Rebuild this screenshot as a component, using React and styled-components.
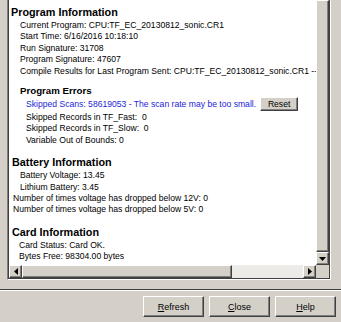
import React from 'react';
import styled, { createGlobalStyle } from 'styled-components';

const GlobalStyle = createGlobalStyle`
  html, body { margin: 0; padding: 0; background: #d4d0c8; }
  body { font-family: "Liberation Sans", Arial, sans-serif; }
`;

const face = '#d4d0c8';
const uiFont = '"Liberation Sans", Arial, sans-serif';

const Window = styled.div`
  width: 341px;
  height: 322px;
  background: ${face};
  display: flex;
  flex-direction: column;
  overflow: hidden;
`;

const Body = styled.div`
  display: flex;
  height: 280px;
  padding: 0 10px 0 7px;
`;

const Sunken = styled.div`
  flex: 1;
  display: flex;
  border-left: 1px solid #808080;
  border-right: 1px solid #ffffff;
  border-bottom: 1px solid #ffffff;
  min-width: 0;
`;

const Frame = styled.div`
  flex: 1;
  min-width: 0;
  display: grid;
  grid-template-columns: 1fr 13px;
  grid-template-rows: 1fr 13px;
  border-left: 1px solid #404040;
  border-right: 1px solid #404040;
  border-bottom: 1px solid #404040;
`;

const View = styled.div`
  background: #fff;
  overflow: hidden;
  white-space: nowrap;
  font-size: 8.6px;
  color: #000;
  padding-top: 5px;
`;

const Heading = styled.div`
  font-weight: bold;
  font-size: ${p => (p.$small ? '9.7px' : '10.8px')};
  line-height: ${p => (p.$small ? '12px' : '14px')};
  margin-top: ${p => p.$gap || 0}px;
  padding-left: ${p => p.$indent}px;
`;

const Line = styled.div`
  line-height: 11.4px;
  height: 11.4px;
  padding-left: ${p => p.$indent}px;
`;

const Group = styled.div`
  margin-top: ${p => p.$gap || 0}px;
`;

const ErrorRow = styled.div`
  display: flex;
  align-items: center;
  height: 15px;
  padding-left: 17px;
  color: #1e1ed8;
  gap: 4px;
`;

const bevel = `
  background: ${face};
  border: 1px solid;
  border-color: #ffffff #404040 #404040 #ffffff;
  box-shadow: inset -1px -1px #808080;
`;

const SmallButton = styled.button`
  ${bevel}
  box-sizing: border-box;
  width: 38px;
  height: 14px;
  padding: 0;
  font: 8.6px ${uiFont};
  color: #000;
`;

const VScroll = styled.div`
  display: flex;
  flex-direction: column;
  background: #ecebe8;
`;

const HScroll = styled.div`
  display: flex;
  background: #ecebe8;
`;

const Thumb = styled.div`
  ${bevel}
  box-sizing: border-box;
  flex: ${p => p.$flex || 1};
`;

const Track = styled.div`
  flex: ${p => p.$flex || 1};
`;

const Arrow = styled.div`
  ${bevel}
  box-sizing: border-box;
  width: 13px;
  height: 13px;
  flex: none;
  display: flex;
  align-items: center;
  justify-content: center;
`;

const Corner = styled.div`
  background: ${face};
`;

const Separator = styled.div`
  height: 0;
  margin-top: 9px;
  border-top: 1px solid #404040;
  border-bottom: 1px solid #ffffff;
`;

const ButtonRow = styled.div`
  display: flex;
  justify-content: flex-end;
  gap: 5px;
  padding: 5px 5px 0 0;
`;

const DialogButton = styled.button`
  ${bevel}
  box-sizing: border-box;
  width: 61px;
  height: 21px;
  padding: 0;
  font: 9px ${uiFont};
  color: #000;
  u { text-decoration: underline; }
`;

const Tri = ({ dir }) => {
  const pts = {
    up: '0,4 3.5,0 7,4',
    down: '0,0 7,0 3.5,4',
    left: '4,0 4,7 0,3.5',
    right: '0,0 0,7 4,3.5',
  }[dir];
  const vertical = dir === 'up' || dir === 'down';
  return (
    <svg width={vertical ? 7 : 4} height={vertical ? 4 : 7}>
      <polygon points={pts} fill="#000" />
    </svg>
  );
};

export default function App() {
  return (
    <Window>
      <GlobalStyle />
      <Body>
        <Sunken>
          <Frame>
            <View>
              <Heading $indent={2}>Program Information</Heading>
              <Group $gap={1}>
                <Line $indent={11}>Current Program: CPU:TF_EC_20130812_sonic.CR1</Line>
                <Line $indent={11}>Start Time: 6/16/2016 10:18:10</Line>
                <Line $indent={11}>Run Signature: 31708</Line>
                <Line $indent={11}>Program Signature: 47607</Line>
                <Line $indent={11}>Compile Results for Last Program Sent: CPU:TF_EC_20130812_sonic.CR1 -- C</Line>
              </Group>
              <Heading $small $gap={8} $indent={11}>Program Errors</Heading>
              <ErrorRow>
                <span>Skipped Scans: 58619053 - The scan rate may be too small.</span>
                <SmallButton>Reset</SmallButton>
              </ErrorRow>
              <Line $indent={17}>Skipped Records in TF_Fast:&nbsp; 0</Line>
              <Line $indent={17}>Skipped Records in TF_Slow:&nbsp; 0</Line>
              <Line $indent={17}>Variable Out of Bounds: 0</Line>
              <Heading $gap={9} $indent={3}>Battery Information</Heading>
              <Group $gap={1}>
                <Line $indent={11}>Battery Voltage: 13.45</Line>
                <Line $indent={11}>Lithium Battery: 3.45</Line>
                <Line $indent={4}>Number of times voltage has dropped below 12V: 0</Line>
                <Line $indent={4}>Number of times voltage has dropped below 5V: 0</Line>
              </Group>
              <Heading $gap={9} $indent={3}>Card Information</Heading>
              <Group $gap={1}>
                <Line $indent={10}>Card Status: Card OK.</Line>
                <Line $indent={10}>Bytes Free: 98304.00 bytes</Line>
              </Group>
            </View>
            <VScroll>
              <Thumb />
              <Arrow><Tri dir="down" /></Arrow>
            </VScroll>
            <HScroll>
              <Arrow><Tri dir="left" /></Arrow>
              <Thumb $flex={209} />
              <Track $flex={72} />
              <Arrow><Tri dir="right" /></Arrow>
            </HScroll>
            <Corner />
          </Frame>
        </Sunken>
      </Body>
      <Separator />
      <ButtonRow>
        <DialogButton><u>R</u>efresh</DialogButton>
        <DialogButton><u>C</u>lose</DialogButton>
        <DialogButton><u>H</u>elp</DialogButton>
      </ButtonRow>
    </Window>
  );
}
